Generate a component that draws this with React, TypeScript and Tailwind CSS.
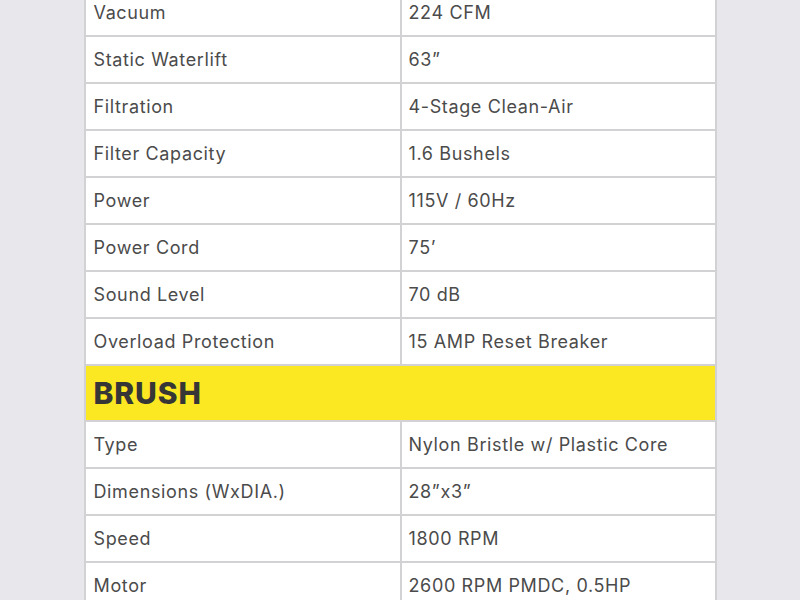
const generalSpecs: [string, string][] = [
  ["Vacuum", "224 CFM"],
  ["Static Waterlift", "63\u201D"],
  ["Filtration", "4-Stage Clean-Air"],
  ["Filter Capacity", "1.6 Bushels"],
  ["Power", "115V / 60Hz"],
  ["Power Cord", "75\u2019"],
  ["Sound Level", "70 dB"],
  ["Overload Protection", "15 AMP Reset Breaker"],
];

const brushSpecs: [string, string][] = [
  ["Type", "Nylon Bristle w/ Plastic Core"],
  ["Dimensions (WxDIA.)", "28\u201Dx3\u201D"],
  ["Speed", "1800 RPM"],
  ["Motor", "2600 RPM PMDC, 0.5HP"],
];

function SpecRow({ label, value }: { label: string; value: string }) {
  return (
    <div className="grid h-[47px] grid-cols-[316px_1fr] border-b-2 border-[#d2d2d4]">
      <div className="flex items-center border-r-2 border-[#d2d2d4] pl-[8px]">
        {label}
      </div>
      <div className="flex items-center pl-[7px]">{value}</div>
    </div>
  );
}

export default function App() {
  return (
    <main className="h-[600px] overflow-hidden bg-[#e8e7ec] font-['Inter',sans-serif] text-[18px] tracking-[0.035em] text-[#4b4b4b]">
      <div className="mx-auto -mt-[10px] w-[633px] border-x-2 border-[#d2d2d4] bg-white">
        {generalSpecs.map(([label, value]) => (
          <SpecRow key={label} label={label} value={value} />
        ))}

        <div className="flex h-[56px] items-center border-b-2 border-[#d2d2d4] bg-[#fce822] pl-[8px]">
          <h2 className="text-[30px] font-extrabold tracking-[0.03em] text-[#363636]">
            BRUSH
          </h2>
        </div>

        {brushSpecs.map(([label, value]) => (
          <SpecRow key={label} label={label} value={value} />
        ))}
      </div>
    </main>
  );
}
